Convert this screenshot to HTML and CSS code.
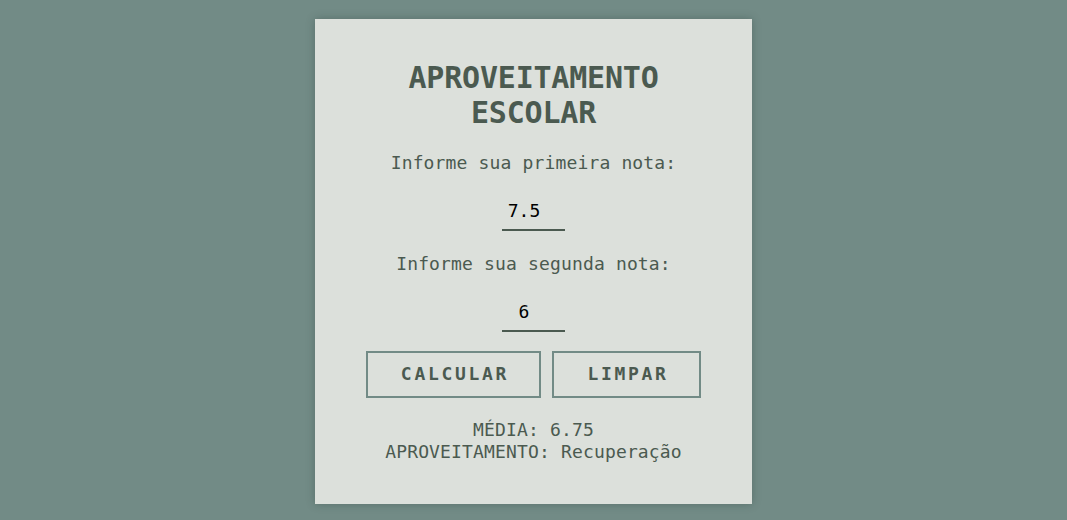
FILE: index.html
```html
<!DOCTYPE html>
<html lang="pt-BR">
<head>
<meta charset="utf-8">
<title>Aproveitamento Escolar</title>
<link rel="stylesheet" href="styles.css">
</head>
<body>
<main class="card">
  <h1 class="title">APROVEITAMENTO<br>ESCOLAR</h1>
  <label class="label" for="n1">Informe sua primeira nota:</label>
  <input class="grade" id="n1" type="text" value="7.5">
  <label class="label" for="n2">Informe sua segunda nota:</label>
  <input class="grade" id="n2" type="text" value="6">
  <div class="actions">
    <button class="btn btn-calc" type="button">CALCULAR</button>
    <button class="btn btn-clear" type="button">LIMPAR</button>
  </div>
  <div class="result">
    <p class="result-line">MÉDIA: 6.75</p>
    <p class="result-line">APROVEITAMENTO: Recuperação</p>
  </div>
</main>
</body>
</html>
```
FILE: styles.css
```css
* { box-sizing: border-box; }
html, body { margin: 0; padding: 0; }
body {
  background: #728b86;
  font-family: "DejaVu Sans Mono", monospace;
  color: #4b5a50;
  min-height: 520px;
  padding-top: 19px;
}
.card {
  width: 437px;
  height: 485px;
  margin: 0 auto;
  background: #dce0db;
  box-shadow: 0 0 8px rgba(40, 60, 55, 0.35);
  padding: 41px 40px 0;
  display: flex;
  flex-direction: column;
  align-items: center;
  text-align: center;
}
.title {
  margin: 0;
  font-size: 30px;
  line-height: 35px;
  font-weight: bold;
  letter-spacing: -0.2px;
  color: #4b5a50;
}
.label {
  margin-top: 22px;
  font-size: 18px;
  line-height: 21px;
  letter-spacing: 0.15px;
}
.grade {
  margin-top: 23px;
  width: 63px;
  border: none;
  border-bottom: 2px solid #4b5a50;
  background: transparent;
  font-family: "DejaVu Sans Mono", monospace;
  font-size: 18px;
  line-height: 21px;
  height: 35px;
  padding: 4px 19px 8px 0;
  text-align: center;
  color: #000;
  outline: none;
}
.actions {
  margin-top: 19px;
  display: flex;
  gap: 11px;
}
.btn {
  background: transparent;
  border: 2px solid #728b86;
  font-family: "DejaVu Sans Mono", monospace;
  font-size: 18px;
  line-height: 21px;
  font-weight: bold;
  letter-spacing: 2.7px;
  color: #4b5a50;
  padding: 10px 0 12px 3px;
  height: 47px;
}
.btn-calc { width: 175px; }
.btn-clear { width: 149px; }
.result {
  margin-top: 21px;
  font-size: 18px;
  letter-spacing: 0.15px;
}
.result-line {
  margin: 0;
  line-height: 22px;
}
```
